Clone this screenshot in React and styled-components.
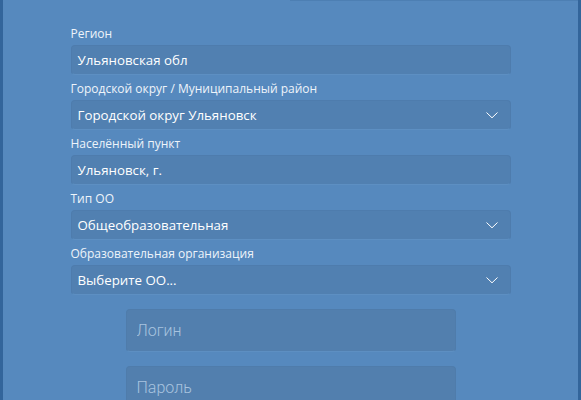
import React from 'react'
import styled, { createGlobalStyle } from 'styled-components'

const Global = createGlobalStyle`
  html, body {
    margin: 0;
    padding: 0;
    background: #5689be;
  }
  body {
    font-family: "Open Sans", "Liberation Sans", sans-serif;
  }
`

const fields = [
  { label: 'Регион', value: 'Ульяновская обл', select: false },
  { label: 'Городской округ / Муниципальный район', value: 'Городской округ Ульяновск', select: true },
  { label: 'Населённый пункт', value: 'Ульяновск, г.', select: false },
  { label: 'Тип ОО', value: 'Общеобразовательная', select: true },
  { label: 'Образовательная организация', value: 'Выберите ОО...', select: true },
]

const Chevron = () => (
  <svg width="14" height="8" viewBox="0 0 14 8" fill="none">
    <path d="M1.5 1.5 L7 6.8 L12.5 1.5" stroke="#ffffff" strokeWidth="1" />
  </svg>
)

const App = () => {
  return (
    <Frame>
      <Global />
      <TopEdge>
        <TopGap />
        <TabEdge />
      </TopEdge>
      <Form>
        {fields.map((f) => (
          <Field key={f.label}>
            <Label>{f.label}</Label>
            <Box>
              <span>{f.value}</span>
              {f.select && <Chevron />}
            </Box>
          </Field>
        ))}
        <Auth>
          <AuthInput placeholder="Логин" />
          <AuthInput placeholder="Пароль" type="password" />
        </Auth>
      </Form>
    </Frame>
  )
}
export default App

const Frame = styled.div`
  width: 581px;
  height: 400px;
  box-sizing: border-box;
  border-left: 3px solid #33659b;
  border-right: 3px solid #33659b;
  background: #5689be;
  overflow: hidden;
  display: flex;
  flex-direction: column;
`

const TopEdge = styled.div`
  display: flex;
  height: 5px;
`

const TopGap = styled.div`
  width: 287px;
`

const TabEdge = styled.div`
  flex: 1;
  background: #2f6196;
  border-bottom: 1px solid #4d7fb3;
`

const Form = styled.div`
  display: flex;
  flex-direction: column;
  align-items: center;
  padding-top: 25px;
`

const Field = styled.div`
  width: 440px;
  display: flex;
  flex-direction: column;
  margin-bottom: 6px;
`

const Label = styled.div`
  height: 16px;
  font-size: 12px;
  line-height: 16px;
  color: #eef4fa;
  margin-bottom: 3px;
`

const Box = styled.div`
  height: 30px;
  box-sizing: border-box;
  border-radius: 4px;
  background: #5180b1;
  border: 1px solid #4e7cad;
  border-bottom-color: #5d8fc2;
  padding: 0 11px 0 6px;
  display: flex;
  align-items: center;
  justify-content: space-between;
  color: #ffffff;
  font-size: 13.3px;
`

const Auth = styled.div`
  display: flex;
  flex-direction: column;
  gap: 14px;
  margin-top: 8px;
`

const AuthInput = styled.input`
  width: 330px;
  height: 43px;
  box-sizing: border-box;
  border-radius: 4px;
  background: #527fae;
  border: 1px solid #4f7cab;
  border-bottom-color: #5d8fc2;
  padding: 0 10px;
  font-family: Roboto, "Open Sans", sans-serif;
  font-weight: 300;
  font-size: 16px;
  color: #ffffff;
  outline: none;
  &::placeholder {
    color: #a8c3df;
  }
`
